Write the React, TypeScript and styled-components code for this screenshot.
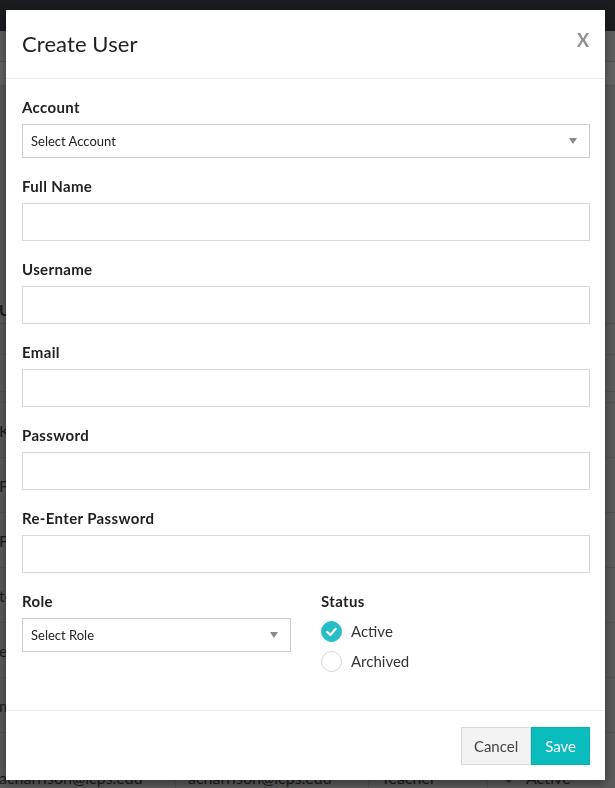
import React from "react";
import styled, { createGlobalStyle } from "styled-components";

const GlobalStyle = createGlobalStyle`
  html, body {
    margin: 0;
    padding: 0;
  }
  body {
    font-family: Lato, "Liberation Sans", sans-serif;
    background: #5a5a5a;
    overflow: hidden;
  }
  * {
    box-sizing: border-box;
  }
`;

// ---- page behind the modal (already dimmed) ----

const Page = styled.div`
  width: 615px;
  height: 788px;
  overflow: hidden;
  background: #5a5a5a;
`;

const NavBar = styled.div`
  height: 31px;
  background: #1b1c20;
`;

const SubBar = styled.div`
  height: 31px;
  background: #5e5e5e;
  border-bottom: 1px solid #525252;
`;

const Toolbar = styled.div`
  height: 24px;
  background: #626262;
  border-bottom: 1px solid #545454;
`;

const Table = styled.div`
  margin-top: 210px;
  margin-left: -3px;
`;

const cols = "178px 193px 119px 1fr";

const Band = styled.div<{ $h: number }>`
  height: ${(p) => p.$h}px;
  border-bottom: 1px solid #515151;
`;

const HeadRow = styled.div`
  display: grid;
  grid-template-columns: ${cols};
  height: 28px;
  border-bottom: 1px solid #4e4e4e;
  font-weight: 700;
  font-size: 16px;
  color: #1a1a1a;
`;

const Row = styled.div<{ $tall?: boolean }>`
  display: grid;
  grid-template-columns: ${cols};
  height: ${(p) => (p.$tall ? 90 : 55)}px;
  border-bottom: 1px solid #515151;
  font-size: 16px;
  color: #1c1c1c;
`;

const Cell = styled.div`
  padding-left: 2px;
  white-space: nowrap;
  overflow: hidden;
  display: flex;
  align-items: center;
  gap: 6px;
  & + & {
    border-left: 1px solid #525252;
    padding-left: 12px;
  }
`;

// ---- modal ----

const Dialog = styled.div`
  position: fixed;
  top: 10px;
  left: 6px;
  width: 599px;
  height: 770px;
  background: #fff;
  box-shadow: 0 3px 9px rgba(0, 0, 0, 0.4);
  display: flex;
  flex-direction: column;
  color: #222;
`;

const Header = styled.div`
  height: 69px;
  padding: 0 16px;
  display: flex;
  align-items: center;
  justify-content: space-between;
  border-bottom: 1px solid #ececec;
`;

const Title = styled.h4`
  margin: 0 0 2px;
  font-size: 22px;
  font-weight: 400;
  color: #222;
  letter-spacing: 0.1px;
`;

const Close = styled.button`
  border: 0;
  background: none;
  padding: 0;
  margin-top: -8px;
  font-family: inherit;
  font-weight: 700;
  font-size: 18px;
  color: #8f8f8f;
  cursor: pointer;
`;

const Body = styled.div`
  padding: 18px 15px 38px 16px;
`;

const Field = styled.div`
  margin-bottom: 18px;
`;

const Label = styled.label`
  display: block;
  font-size: 15px;
  font-weight: 700;
  line-height: 20px;
  letter-spacing: 0.35px;
  margin-bottom: 7px;
  color: #222;
`;

const Input = styled.input`
  display: block;
  width: 100%;
  height: 38px;
  border: 1px solid #d5d6de;
  border-radius: 0;
  outline: none;
  padding: 0 8px;
  font-family: inherit;
  font-size: 14px;
`;

const Select = styled.div`
  height: 34px;
  border: 1px solid #cdcdcd;
  padding: 0 12px 0 8px;
  display: flex;
  align-items: center;
  justify-content: space-between;
  font-size: 13px;
  color: #222;
`;

const Caret = styled.span`
  width: 0;
  height: 0;
  border-left: 4px solid transparent;
  border-right: 4px solid transparent;
  border-top: 6px solid #888;
`;

const Split = styled.div`
  display: grid;
  grid-template-columns: 269px 269px;
  column-gap: 30px;
`;

const RadioGroup = styled.div`
  padding-top: 3px;
  display: flex;
  flex-direction: column;
  gap: 10px;
`;

const RadioRow = styled.div`
  display: flex;
  align-items: center;
  gap: 9px;
  height: 20px;
  font-size: 15px;
  color: #333;
`;

const Dot = styled.span<{ $on?: boolean }>`
  width: 21px;
  height: 21px;
  border-radius: 50%;
  flex: none;
  display: flex;
  align-items: center;
  justify-content: center;
  background: ${(p) => (p.$on ? "#25bdc7" : "#fff")};
  border: 1px solid ${(p) => (p.$on ? "#25bdc7" : "#d8d4d2")};
`;

const Footer = styled.div`
  margin-top: auto;
  border-top: 1px solid #eeeeee;
  padding: 16px 15px 15px;
  display: flex;
  justify-content: flex-end;
`;

const Button = styled.button<{ $primary?: boolean }>`
  height: 38px;
  padding: 0 ${(p) => (p.$primary ? "13px" : "12px")};
  font-family: inherit;
  font-size: 15px;
  border-radius: 0;
  cursor: pointer;
  background: ${(p) => (p.$primary ? "#0bbcbf" : "#f3f3f3")};
  color: ${(p) => (p.$primary ? "#fff" : "#444")};
  border: 1px solid ${(p) => (p.$primary ? "#0aadb0" : "#dadada")};
`;

const fields = ["Full Name", "Username", "Email", "Password", "Re-Enter Password"];

const rows = [
  ["Kathryn Hale", "khale@lcps.edu", "Admin", "Active"],
  ["Frank Dunn", "fdunn@lcps.edu", "Teacher", "Active"],
  ["Fiona Marsh", "fmarsh@lcps.edu", "Teacher", "Active"],
  ["teresa.b@lcps.edu", "teresa.b@lcps.edu", "Teacher", "Active"],
  ["ellen.w@lcps.edu", "ellen.w@lcps.edu", "Teacher", "Active"],
  ["mjones@lcps.edu", "mjones@lcps.edu", "Teacher", "Active"],
  ["acharrison@lcps.edu", "acharrison@lcps.edu", "Teacher", "Active"],
];

const Check = ({ color, size }: { color: string; size: number }) => (
  <svg width={size} height={size} viewBox="0 0 20 20" fill="none">
    <polyline
      points="5.5,10.5 8.8,13.6 14.5,7.2"
      stroke={color}
      strokeWidth="2.3"
      strokeLinecap="round"
      strokeLinejoin="round"
    />
  </svg>
);

export default function App() {
  return (
    <>
      <GlobalStyle />
      <Page>
        <NavBar />
        <SubBar />
        <Toolbar />
        <Table>
          <HeadRow>
            <Cell>Username</Cell>
            <Cell>Email</Cell>
            <Cell>Role</Cell>
            <Cell>Status</Cell>
          </HeadRow>
          <Band $h={31} />
          <Band $h={37} />
          <Band $h={11} />
          {rows.map((r, i) => (
            <Row key={r[0]} $tall={i === rows.length - 1}>
              <Cell>{r[0]}</Cell>
              <Cell>{r[1]}</Cell>
              <Cell>{r[2]}</Cell>
              <Cell>
                <Check color="#1d3f25" size={20} />
                {r[3]}
              </Cell>
            </Row>
          ))}
        </Table>
      </Page>

      <Dialog role="dialog">
        <Header>
          <Title>Create User</Title>
          <Close>X</Close>
        </Header>
        <Body>
          <Field>
            <Label>Account</Label>
            <Select>
              Select Account
              <Caret />
            </Select>
          </Field>
          {fields.map((f) => (
            <Field key={f}>
              <Label>{f}</Label>
              <Input type={f.includes("Password") ? "password" : "text"} />
            </Field>
          ))}
          <Split>
            <div>
              <Label>Role</Label>
              <Select>
                Select Role
                <Caret />
              </Select>
            </div>
            <div>
              <Label>Status</Label>
              <RadioGroup>
                <RadioRow>
                  <Dot $on>
                    <Check color="#fff" size={19} />
                  </Dot>
                  Active
                </RadioRow>
                <RadioRow>
                  <Dot />
                  Archived
                </RadioRow>
              </RadioGroup>
            </div>
          </Split>
        </Body>
        <Footer>
          <Button>Cancel</Button>
          <Button $primary>Save</Button>
        </Footer>
      </Dialog>
    </>
  );
}
